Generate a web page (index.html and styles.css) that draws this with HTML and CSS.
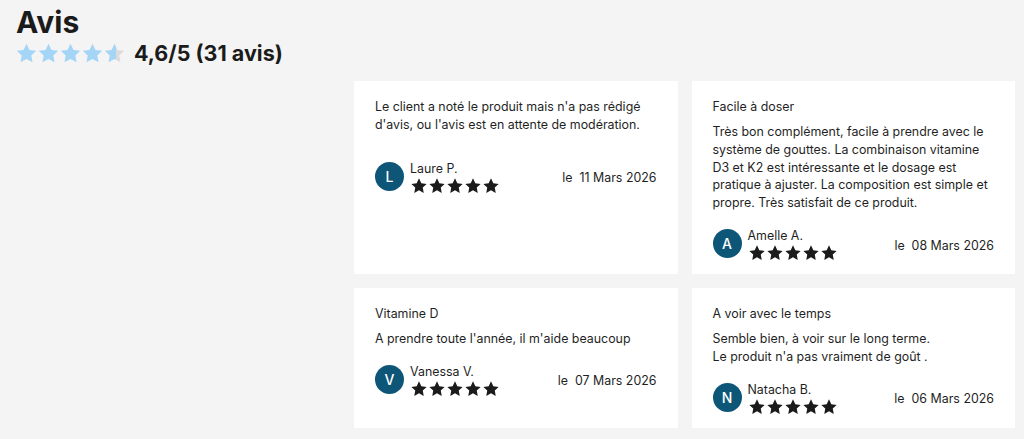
FILE: index.html
```html
<!DOCTYPE html>
<html lang="fr">
<head>
<meta charset="utf-8">
<link rel="stylesheet" href="styles.css">
</head>
<body>
<svg width="0" height="0" class="defs" aria-hidden="true">
  <defs>
    <symbol id="star" viewBox="0 0 24 24"><path d="M12 1.8l3.1 6.5 7.1.9-5.2 4.9 1.3 7.1L12 17.8l-6.3 3.4 1.3-7.1-5.2-4.9 7.1-.9z"/></symbol>
    <linearGradient id="half"><stop offset="58%" stop-color="#a5d5f6"/><stop offset="58%" stop-color="#dcdcdc"/></linearGradient>
  </defs>
</svg>
<header class="head">
  <h1 class="title">Avis</h1>
  <div class="summary">
    <div class="big-stars">
      <svg class="bstar"><use href="#star"/></svg>
      <svg class="bstar"><use href="#star"/></svg>
      <svg class="bstar"><use href="#star"/></svg>
      <svg class="bstar"><use href="#star"/></svg>
      <svg class="bstar half"><use href="#star"/></svg>
    </div>
    <span class="score">4,6/5 (31 avis)</span>
  </div>
</header>
<main class="layout">
  <aside class="side"></aside>
  <section class="reviews">
    <article class="card">
      <p class="body pending">Le client a noté le produit mais n'a pas rédigé d'avis, ou l'avis est en attente de modération.</p>
      <div class="foot">
        <div class="author">
          <span class="avatar">L</span>
          <div class="who">
            <span class="name">Laure P.</span>
            <div class="stars"><svg><use href="#star"/></svg><svg><use href="#star"/></svg><svg><use href="#star"/></svg><svg><use href="#star"/></svg><svg><use href="#star"/></svg></div>
          </div>
        </div>
        <span class="date">le&nbsp; 11 Mars 2026</span>
      </div>
    </article>
    <article class="card">
      <h3 class="rtitle">Facile à doser</h3>
      <p class="body">Très bon complément, facile à prendre avec le système de gouttes. La combinaison vitamine D3 et K2 est intéressante et le dosage est pratique à ajuster. La composition est simple et propre. Très satisfait de ce produit.</p>
      <div class="foot">
        <div class="author">
          <span class="avatar">A</span>
          <div class="who">
            <span class="name">Amelle A.</span>
            <div class="stars"><svg><use href="#star"/></svg><svg><use href="#star"/></svg><svg><use href="#star"/></svg><svg><use href="#star"/></svg><svg><use href="#star"/></svg></div>
          </div>
        </div>
        <span class="date">le&nbsp; 08 Mars 2026</span>
      </div>
    </article>
    <article class="card">
      <h3 class="rtitle">Vitamine D</h3>
      <p class="body">A prendre toute l'année, il m'aide beaucoup</p>
      <div class="foot">
        <div class="author">
          <span class="avatar">V</span>
          <div class="who">
            <span class="name">Vanessa V.</span>
            <div class="stars"><svg><use href="#star"/></svg><svg><use href="#star"/></svg><svg><use href="#star"/></svg><svg><use href="#star"/></svg><svg><use href="#star"/></svg></div>
          </div>
        </div>
        <span class="date">le&nbsp; 07 Mars 2026</span>
      </div>
    </article>
    <article class="card">
      <h3 class="rtitle">A voir avec le temps</h3>
      <p class="body">Semble bien, à voir sur le long terme.<br>Le produit n'a pas vraiment de goût .</p>
      <div class="foot">
        <div class="author">
          <span class="avatar">N</span>
          <div class="who">
            <span class="name">Natacha B.</span>
            <div class="stars"><svg><use href="#star"/></svg><svg><use href="#star"/></svg><svg><use href="#star"/></svg><svg><use href="#star"/></svg><svg><use href="#star"/></svg></div>
          </div>
        </div>
        <span class="date">le&nbsp; 06 Mars 2026</span>
      </div>
    </article>
  </section>
</main>
</body>
</html>
```
FILE: styles.css
```css
* { box-sizing: border-box; }
html, body { margin: 0; }
body {
  background: #f4f4f4;
  font-family: Inter, "Noto Sans", sans-serif;
  color: #1f1f1f;
  padding: 0 9px 0 16px;
}
.defs { position: absolute; }
.head { padding-top: 4px; }
.title {
  margin: 0;
  font-size: 30px;
  font-weight: 700;
  line-height: 36px;
  color: #1b1b1b;
}
.summary {
  display: flex;
  align-items: center;
  gap: 9px;
  height: 26px;
}
.big-stars { display: flex; margin-left: -1px; }
.bstar { width: 23px; height: 23px; margin-right: -1px; fill: #a5d5f6; }
.bstar.half { fill: url(#half); }
.score {
  font-size: 21.5px;
  font-weight: 700;
  color: #1b1b1b;
}
.layout {
  display: grid;
  grid-template-columns: 338px 1fr;
  margin-top: 15px;
}
.reviews {
  display: grid;
  grid-template-columns: 1fr 1fr;
  gap: 14px 14px;
}
.card {
  background: #fff;
  padding: 17px 21px 13px;
  display: flex;
  flex-direction: column;
  font-size: 12.4px;
  line-height: 17.8px;
}
.rtitle {
  margin: 0 0 7px;
  font-size: 12.4px;
  font-weight: 400;
  line-height: 18px;
}
.body { margin: 0 0 15px; }
.body.pending { margin-bottom: 26px; }
.foot {
  display: flex;
  align-items: center;
  justify-content: space-between;
}
.author { display: flex; align-items: center; gap: 6px; }
.avatar {
  width: 29px;
  height: 29px;
  border-radius: 50%;
  background: #0e5678;
  color: #fff;
  font-size: 14px;
  font-weight: 500;
  display: flex;
  align-items: center;
  justify-content: center;
}
.who { display: flex; flex-direction: column; }
.name { line-height: 18px; }
.stars { display: flex; height: 16px; align-items: center; }
.stars svg { width: 18px; height: 18px; fill: #1b1b1b; }
.date { font-size: 12.4px; padding-top: 3px; }
```
